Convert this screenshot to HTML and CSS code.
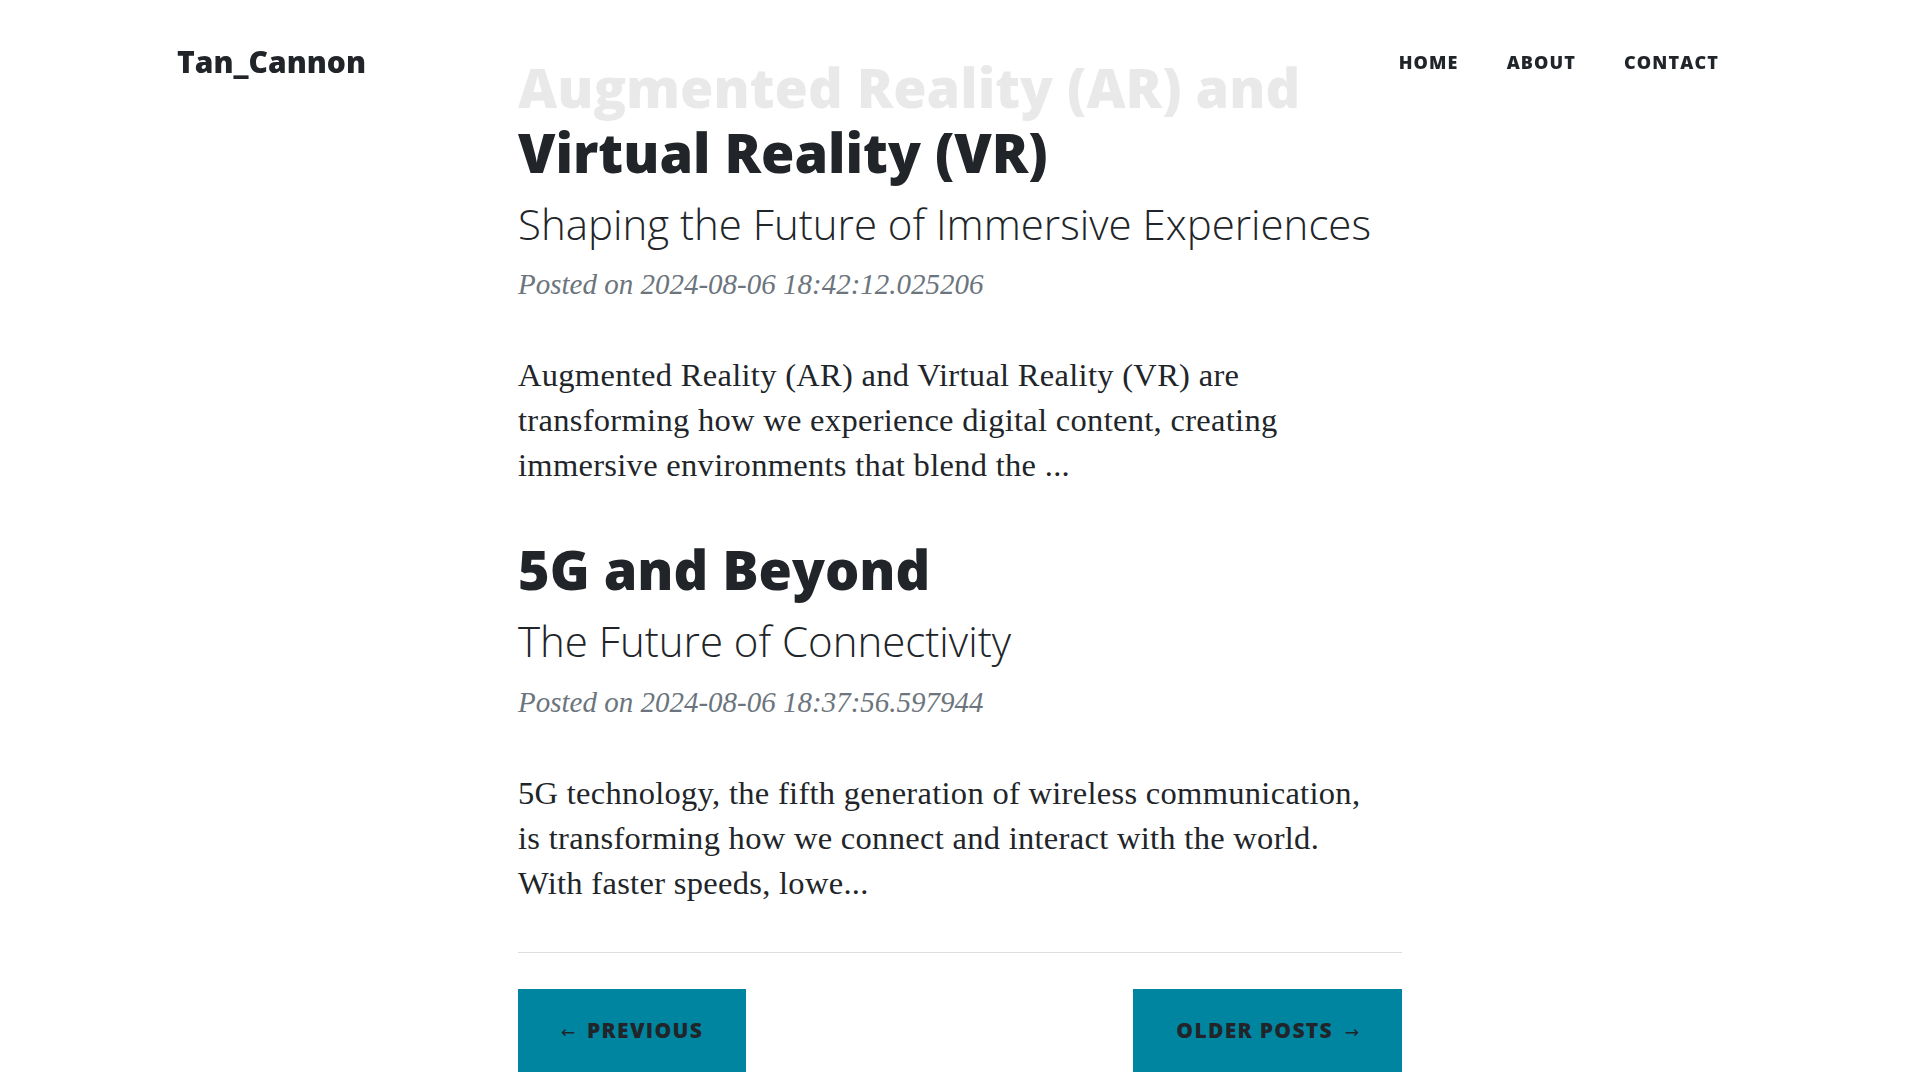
FILE: index.html
```html
<!DOCTYPE html>
<html lang="en">
<head>
<meta charset="utf-8">
<title>Tan_Cannon</title>
<link rel="stylesheet" href="styles.css">
</head>
<body>
<nav class="site-nav">
  <div class="nav-inner">
    <a class="brand" href="#">Tan_Cannon</a>
    <ul class="nav-links">
      <li><a href="#">Home</a></li>
      <li><a href="#">About</a></li>
      <li><a href="#">Contact</a></li>
    </ul>
  </div>
</nav>
<main class="page">
  <div class="column">
    <article class="post-preview">
      <a class="post-link" href="#">
        <h2 class="post-title">Augmented Reality (AR) and Virtual Reality (VR)</h2>
        <h3 class="post-subtitle">Shaping the Future of Immersive Experiences</h3>
      </a>
      <p class="post-meta">Posted on 2024-08-06 18:42:12.025206</p>
      <p class="post-excerpt">Augmented Reality (AR) and Virtual Reality (VR) are<br>transforming how we experience digital content, creating<br>immersive environments that blend the ...</p>
    </article>
    <article class="post-preview">
      <a class="post-link" href="#">
        <h2 class="post-title">5G and Beyond</h2>
        <h3 class="post-subtitle">The Future of Connectivity</h3>
      </a>
      <p class="post-meta">Posted on 2024-08-06 18:37:56.597944</p>
      <p class="post-excerpt">5G technology, the fifth generation of wireless communication,<br>is transforming how we connect and interact with the world.<br>With faster speeds, lowe...</p>
    </article>
    <hr class="divider">
    <div class="pager">
      <a class="btn" href="#"><span class="arrow arrow-left">&larr;</span> Previous</a>
      <a class="btn" href="#">Older Posts <span class="arrow arrow-right">&rarr;</span></a>
    </div>
  </div>
</main>
</body>
</html>
```
FILE: styles.css
```css
html, body {
  margin: 0;
  padding: 0;
}

body {
  font-family: "Liberation Serif", "Times New Roman", serif;
  color: #212529;
  background: #fff;
}

/* ---------- navigation (fixed, translucent) ---------- */
.site-nav {
  position: fixed;
  top: 0;
  left: 0;
  right: 0;
  height: 123px;
  background: rgba(255, 255, 255, 0.9);
  z-index: 10;
}

.nav-inner {
  width: 1566px;
  height: 100%;
  margin: 0 auto;
  display: flex;
  align-items: center;
  justify-content: space-between;
}

.brand {
  font-family: "Open Sans", "Liberation Sans", sans-serif;
  font-weight: 800;
  font-size: 30px;
  line-height: 1;
  color: #212529;
  text-decoration: none;
}

.nav-links {
  display: flex;
  list-style: none;
  margin: 0;
  padding: 0;
}

.nav-links a {
  display: block;
  padding: 2px 24px 0;
  font-family: "Open Sans", "Liberation Sans", sans-serif;
  font-weight: 800;
  font-size: 18px;
  line-height: 27px;
  letter-spacing: 0.0625em;
  text-transform: uppercase;
  color: #212529;
  text-decoration: none;
}

/* ---------- posts ---------- */
.page {
  padding-top: 55px;
}

.column {
  width: 884px;
  margin: 0 auto;
}

.post-link {
  color: #212529;
  text-decoration: none;
}

.post-title {
  margin: 0 0 14px;
  font-family: "Open Sans", "Liberation Sans", sans-serif;
  font-weight: 800;
  font-size: 54px;
  line-height: 1.2;
}

.post-subtitle {
  margin: 0 0 15px;
  font-family: "Open Sans", "Liberation Sans", sans-serif;
  font-weight: 300;
  font-size: 42px;
  line-height: 1.2;
}

.post-meta {
  margin: 0;
  font-style: italic;
  font-size: 29px;
  line-height: 40.5px;
  color: #6c757d;
}

.post-excerpt {
  margin: 49px 0 0;
  font-size: 32.5px;
  line-height: 45px;
  letter-spacing: 0.3px;
}

.post-preview + .post-preview {
  margin-top: 49px;
}

.divider {
  margin: 46px 0 36px;
  border: 0;
  border-top: 1.5px solid #dcdee1;
}

/* ---------- pager ---------- */
.pager {
  display: flex;
  justify-content: space-between;
}

.btn {
  display: inline-block;
  padding: 25.5px 43px;
  background: #0085a1;
  color: #212529;
  font-family: "Open Sans", "Liberation Sans", sans-serif;
  font-weight: 800;
  font-size: 21px;
  line-height: 31.5px;
  letter-spacing: 0.0625em;
  text-transform: uppercase;
  text-decoration: none;
}

.arrow {
  font-family: "DejaVu Sans", sans-serif;
  font-weight: 400;
  font-size: 17px;
  line-height: 0;
  letter-spacing: 0;
}

.arrow-left {
  margin-right: 5px;
}

.arrow-right {
  margin-left: 5px;
}
```
